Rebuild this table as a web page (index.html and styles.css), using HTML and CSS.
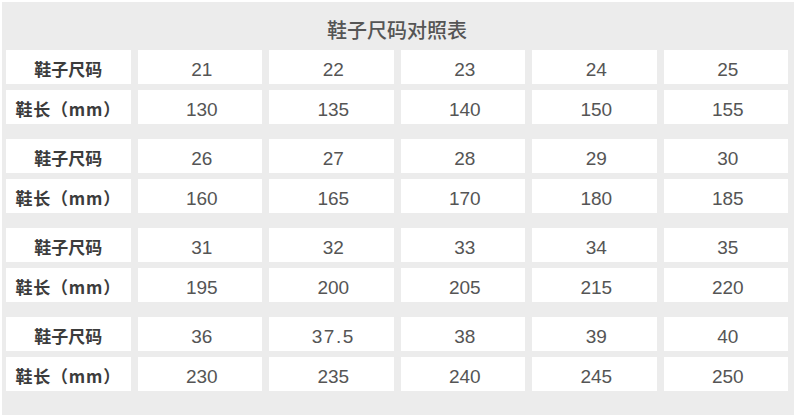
FILE: index.html
```html
<!DOCTYPE html>
<html lang="zh-CN">
<head>
<meta charset="utf-8">
<title>鞋子尺码对照表</title>
<link rel="stylesheet" href="styles.css">
</head>
<body>
<div class="sheet">
  <div class="title">鞋子尺码对照表</div>
  <div class="group">
    <div class="cell label">鞋子尺码</div>
    <div class="cell num">21</div><div class="cell num">22</div><div class="cell num">23</div><div class="cell num">24</div><div class="cell num">25</div>
    <div class="cell label len">鞋长（mm）</div>
    <div class="cell num">130</div><div class="cell num">135</div><div class="cell num">140</div><div class="cell num">150</div><div class="cell num">155</div>
  </div>
  <div class="group">
    <div class="cell label">鞋子尺码</div>
    <div class="cell num">26</div><div class="cell num">27</div><div class="cell num">28</div><div class="cell num">29</div><div class="cell num">30</div>
    <div class="cell label len">鞋长（mm）</div>
    <div class="cell num">160</div><div class="cell num">165</div><div class="cell num">170</div><div class="cell num">180</div><div class="cell num">185</div>
  </div>
  <div class="group">
    <div class="cell label">鞋子尺码</div>
    <div class="cell num">31</div><div class="cell num">32</div><div class="cell num">33</div><div class="cell num">34</div><div class="cell num">35</div>
    <div class="cell label len">鞋长（mm）</div>
    <div class="cell num">195</div><div class="cell num">200</div><div class="cell num">205</div><div class="cell num">215</div><div class="cell num">220</div>
  </div>
  <div class="group">
    <div class="cell label">鞋子尺码</div>
    <div class="cell num">36</div><div class="cell num wide">37.5</div><div class="cell num">38</div><div class="cell num">39</div><div class="cell num">40</div>
    <div class="cell label len">鞋长（mm）</div>
    <div class="cell num">230</div><div class="cell num">235</div><div class="cell num">240</div><div class="cell num">245</div><div class="cell num">250</div>
  </div>
</div>
</body>
</html>
```
FILE: styles.css
```css
html, body {
  margin: 0;
  padding: 0;
  background: #ffffff;
}
.sheet {
  margin: 2px 0 0 2px;
  height: 413px;
  box-sizing: border-box;
  background: #ececec;
  padding: 0 6px 0 4px;
}
.title {
  padding-top: 7px;
  height: 41px;
  line-height: 42px;
  text-align: center;
  font-family: "Noto Sans CJK SC", sans-serif;
  font-size: 20px;
  font-weight: 500;
  color: #555555;
}
.group {
  display: grid;
  grid-template-columns: repeat(6, 1fr);
  grid-auto-rows: 34px;
  column-gap: 7px;
  row-gap: 6px;
  margin-bottom: 15px;
}
.cell {
  background: #ffffff;
  display: flex;
  align-items: center;
  justify-content: center;
  box-sizing: border-box;
}
.label {
  font-family: "Noto Sans CJK SC", sans-serif;
  font-weight: 700;
  font-size: 17px;
  color: #3c3c3c;
  padding-top: 2px;
}
.len {
  letter-spacing: 0.8px;
}
.num {
  font-family: "Liberation Sans", Arial, sans-serif;
  font-size: 19px;
  color: #555555;
  padding-top: 5px;
  padding-left: 4px;
}
.wide {
  letter-spacing: 1.5px;
}
```
